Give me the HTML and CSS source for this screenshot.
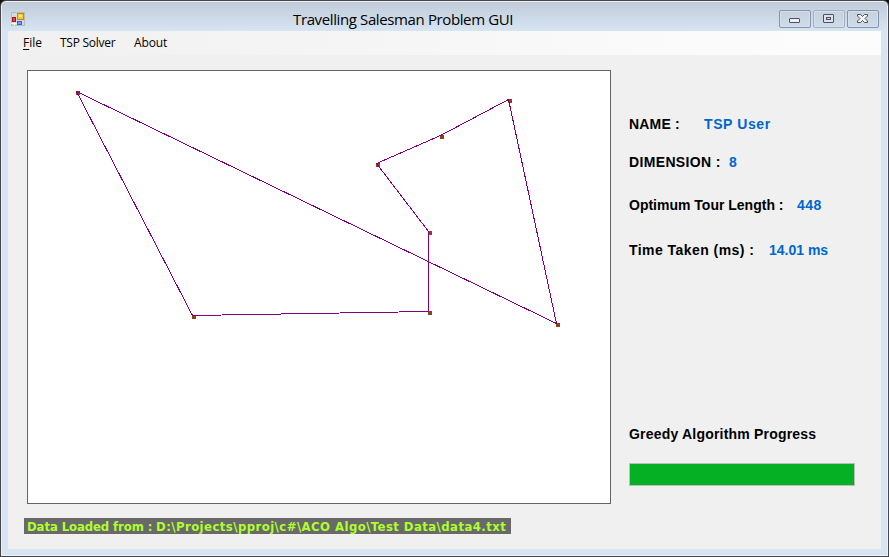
FILE: index.html
```html
<!DOCTYPE html>
<html lang="en">
<head>
<meta charset="utf-8">
<title>Travelling Salesman Problem GUI</title>
<link rel="stylesheet" href="styles.css">
</head>
<body>
<div class="window">
  <header class="titlebar">
    <svg class="app-icon" width="14" height="14" viewBox="0 0 14 14">
      <rect x=".5" y=".5" width="13" height="13" fill="#d3d8dc" stroke="#b8b9ba"/>
      <path d="M3.500 10v4M0 11.500h6" stroke="#f4f4f4"/>
      <rect x="6.500" y="1.500" width="6" height="6" fill="#fbc934" stroke="#c28a10"/>
      <rect x="8" y="3" width="3" height="2" fill="#ffe58a"/>
      <rect x="1.500" y="5.500" width="3" height="4" fill="#e0483a" stroke="#9c1a12"/>
      <rect x="6.500" y="9.500" width="4" height="3" fill="#6ea2f0" stroke="#3468c8"/>
    </svg>
    <h1 class="title">Travelling Salesman Problem GUI</h1>
    <div class="controls">
      <button class="ctl" aria-label="Minimize"><svg width="11" height="9" viewBox="0 0 11 9"><rect x=".5" y="4.500" width="10" height="4" rx=".5" fill="#f0f0f0" stroke="#4c5062"/></svg></button>
      <button class="ctl ctl-off" aria-label="Maximize"><svg width="11" height="9" viewBox="0 0 11 9"><rect x=".5" y=".5" width="10" height="8" rx=".5" fill="#dfe2e7" stroke="#4c5062"/><rect x="3.500" y="3.500" width="4" height="2" fill="#c6d2e2" stroke="#4c5062"/></svg></button>
      <button class="ctl" aria-label="Close"><svg width="11" height="9" viewBox="0 0 11 9"><path d="M.5.5h3l2 2 2-2h3V2L8 4.500 10.500 7v1.500h-3l-2-2-2 2h-3V7L3 4.500.5 2z" fill="#f4f4f4" stroke="#4c5062"/></svg></button>
    </div>
  </header>
  <main class="client">
    <nav class="menu">
      <span class="m-file"><u>F</u>ile</span>
      <span class="m-solver">TSP Solver</span>
      <span class="m-about">About</span>
    </nav>
    <div class="content">
      <section class="left">
        <svg class="plot" viewBox="28 71 582 432" width="582" height="432" shape-rendering="crispEdges">
          <g fill="#8b4513">
            <rect x="76" y="91" width="4" height="4"/><rect x="192" y="315" width="4" height="4"/>
            <rect x="428" y="311" width="4" height="4"/><rect x="428" y="231" width="4" height="4"/>
            <rect x="376" y="163" width="4" height="4"/><rect x="440" y="135" width="4" height="4"/>
            <rect x="508" y="99" width="4" height="4"/><rect x="556" y="323" width="4" height="4"/>
          </g>
          <path d="M76.500 91.500L192.500 315.500L428.500 311.500V231.500L376.500 163.500L440.500 135.500L508.500 99.500L556.500 323.500Z" fill="none" stroke="#800080" stroke-linejoin="bevel"/>
        </svg>
        <p class="status"><span class="s-label">Data Loaded from :</span><span class="s-path">D:\Projects\pproj\c#\ACO Algo\Test Data\data4.txt</span></p>
      </section>
      <aside class="info">
        <dl>
          <div class="row r-name"><dt>NAME :</dt><dd>TSP User</dd></div>
          <div class="row r-dim"><dt>DIMENSION :</dt><dd>8</dd></div>
          <div class="row r-len"><dt>Optimum Tour Length :</dt><dd>448</dd></div>
          <div class="row r-time"><dt>Time Taken (ms) :</dt><dd>14.01 ms</dd></div>
        </dl>
        <h2>Greedy Algorithm Progress</h2>
        <div class="progress"></div>
      </aside>
    </div>
  </main>
</div>
</body>
</html>
```
FILE: styles.css
```css
* { box-sizing: border-box; }
body { margin: 0; background: #111; overflow: hidden; }
.window {
  width: 889px; height: 557px; padding: 0 7px 7px;
  border: 1px solid #4a4648; border-radius: 6px 6px 0 0;
  box-shadow: inset 0 0 0 1px #eaf1f9;
  background: linear-gradient(#bfcbd9, #d7e4f2 30px);
}
.titlebar { display: flex; align-items: flex-start; height: 30px; }
.app-icon { flex: none; margin: 11px 0 0 3px; }
.title { flex: 1; margin: 8px 0 0; padding-left: 268px; font: 15px/20px "Open Sans", sans-serif; letter-spacing: -.38px; color: #000; white-space: nowrap; }
.controls { display: flex; gap: 2px; margin: 9px 2px 0 0; }
.ctl {
  display: flex; align-items: flex-start; justify-content: center;
  width: 32px; height: 18px; padding: 3px 1px 0 0;
  border: 1px solid #8493ae; border-radius: 2px;
  background: linear-gradient(#c5d1df, #cedbe9);
  box-shadow: inset 0 0 0 1px #d5e0ec;
}
.ctl-off { border-color: #a3b0c2; }
.client { height: 518px; background: #f0f0f0; }
.menu {
  display: flex; height: 24px; padding-left: 15px;
  background: linear-gradient(90deg, #f0f0f0, #fcfcfc 90%);
  font: 12px/24px "Open Sans", sans-serif; color: #000; white-space: nowrap;
}
.menu u { text-underline-offset: 2px; }
.m-file { width: 37px; }
.m-solver { width: 74px; letter-spacing: -.25px; }
.m-about { letter-spacing: -.1px; }
.content { display: flex; }
.left { width: 603px; padding: 15px 0 0 19px; }
.plot { display: block; box-sizing: content-box; background: #fff; border: 1px solid #646464; }
.status {
  display: flex; width: 487px; height: 16px; margin: 14px 0 0 -3px; padding-left: 3px;
  background: #696969; color: #adff2f; white-space: nowrap;
  font: bold 13px/17px "DejaVu Sans Condensed", "DejaVu Sans", sans-serif; font-stretch: condensed;
}
.s-label { width: 129px; letter-spacing: -.1px; }
.s-path { letter-spacing: .43px; }
.info { padding: 60px 0 0 18px; font: bold 14px/18px "Liberation Sans", sans-serif; white-space: nowrap; }
dl, dd { margin: 0; }
.row { display: flex; height: 18px; }
dt { flex: none; }
dd { color: #0066cc; }
.r-name dt { width: 75px; letter-spacing: .2px; }
.r-name dd { letter-spacing: .6px; }
.r-dim { margin-top: 20px; }
.r-dim dt { width: 100px; letter-spacing: .35px; }
.r-len { margin-top: 25px; }
.r-len dt { width: 168px; }
.r-len dd { letter-spacing: .5px; }
.r-time { margin-top: 27px; }
.r-time dt { width: 140px; letter-spacing: .45px; }
h2 { margin: 166px 0 0; font: inherit; letter-spacing: .2px; }
.progress { width: 226px; height: 23px; margin-top: 20px; background: #06b025; border: 1px solid #bcbcbc; }
```
